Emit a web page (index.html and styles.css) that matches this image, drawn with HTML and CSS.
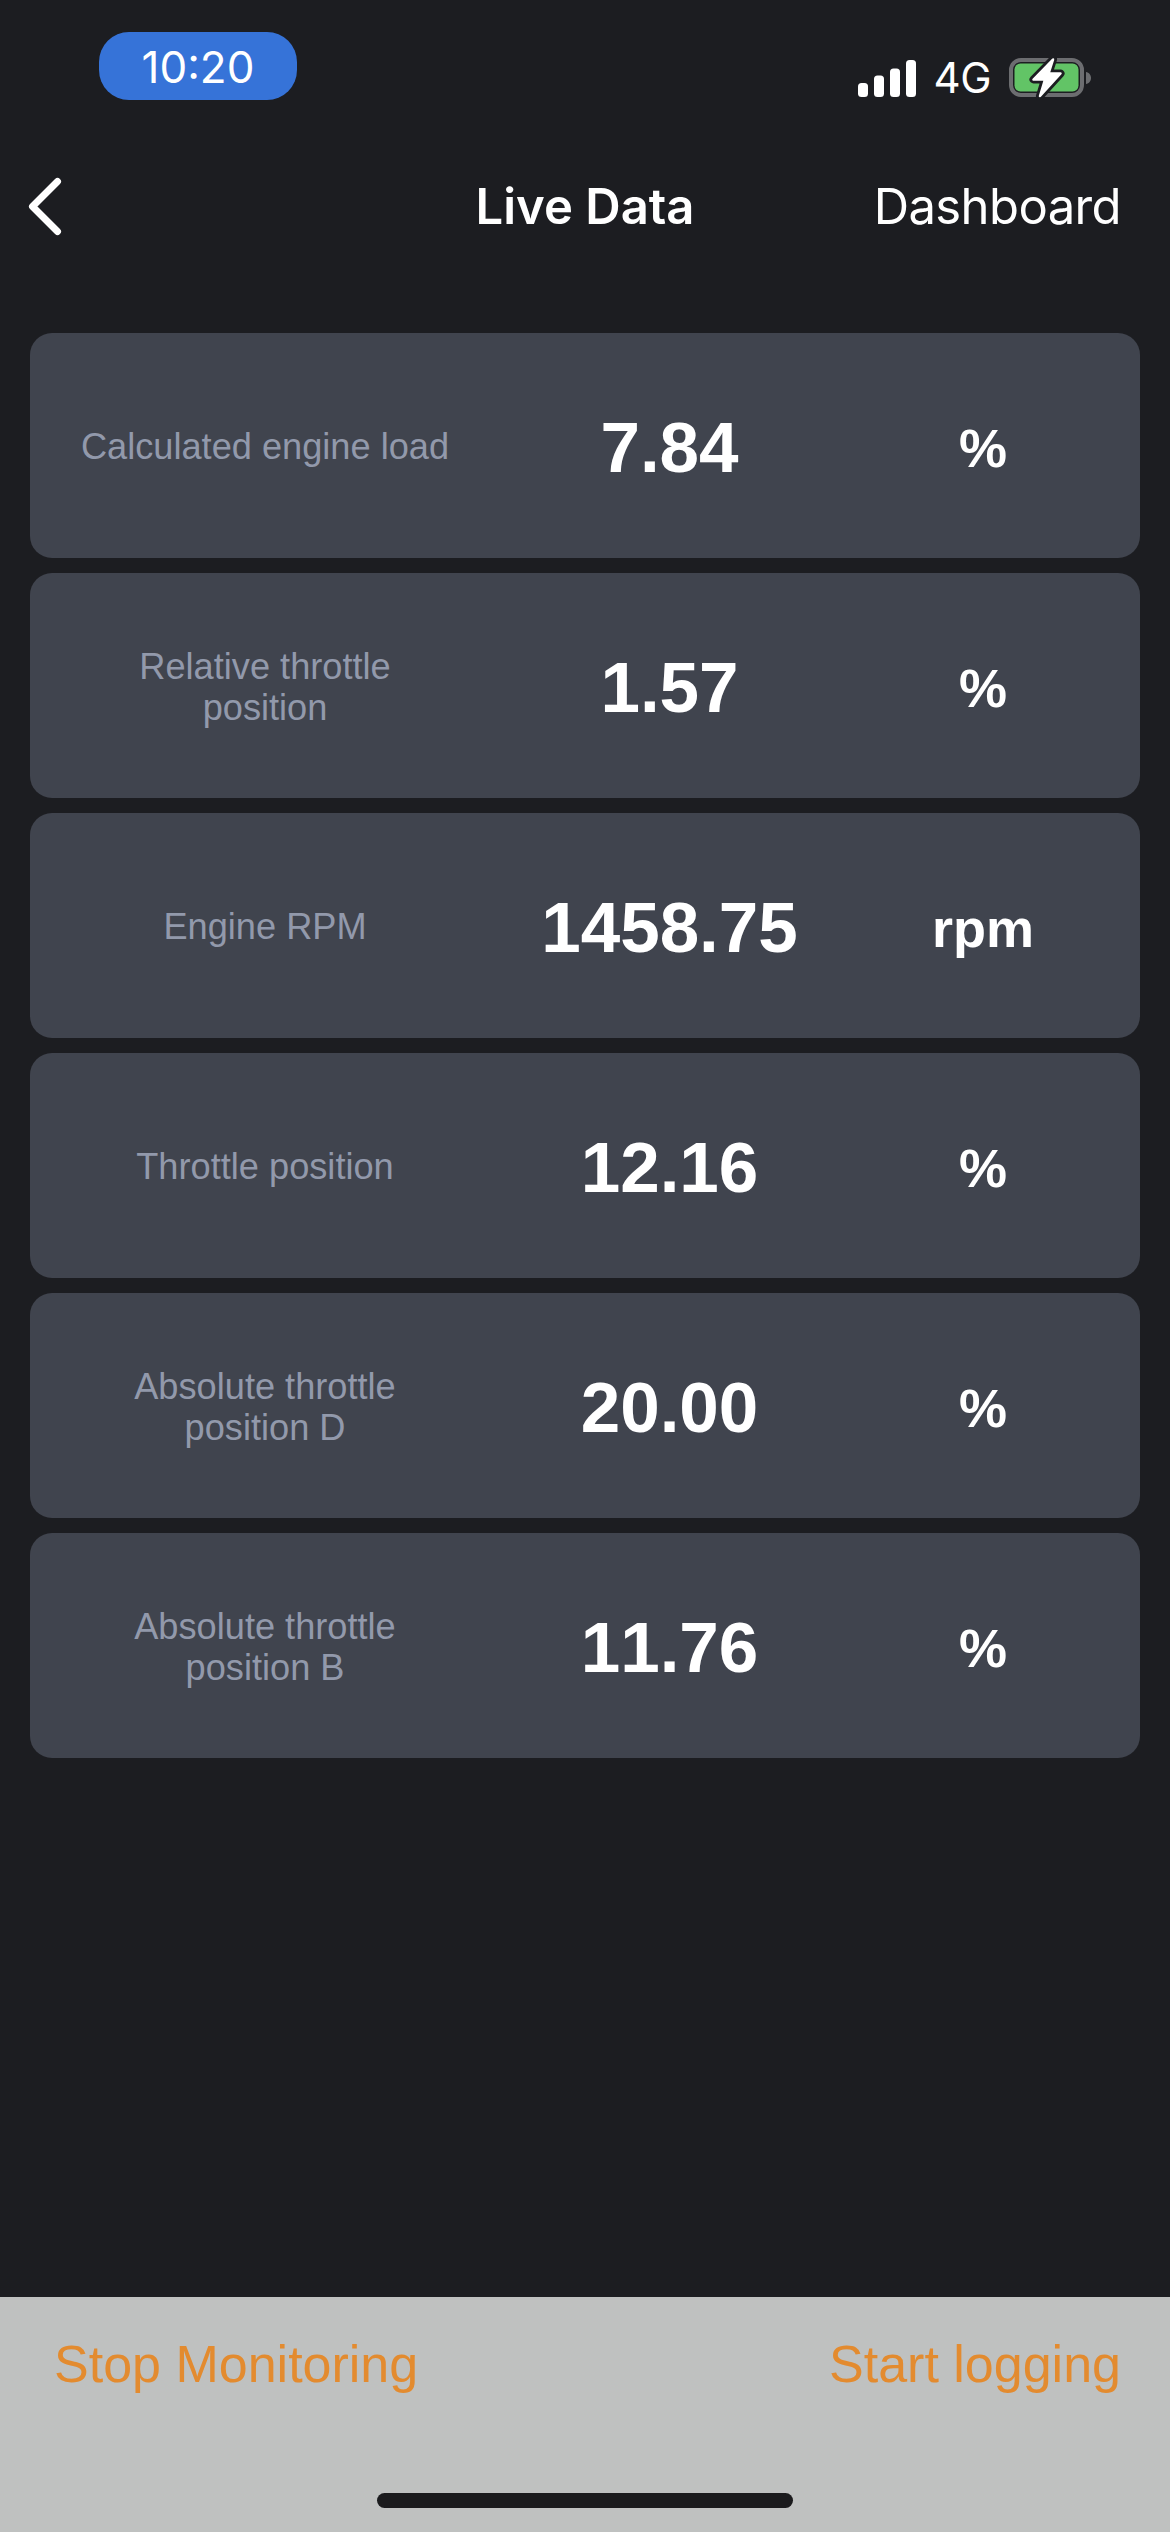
FILE: index.html
```html
<!DOCTYPE html>
<html lang="en">
<head>
    <meta charset="UTF-8">
    <meta name="viewport" content="width=device-width, initial-scale=1.0">
    <title>Live Data</title>
    <link rel="stylesheet" href="styles.css">
</head>
<body>
    <div class="screen">
        <!-- Status bar -->
        <div class="status-bar">
            <div class="time-pill">10:20</div>
            <div class="status-icons">
                <svg class="signal" width="58" height="37" viewBox="0 0 58 37">
                    <rect x="0" y="23" width="10" height="14" rx="3.5"/>
                    <rect x="16" y="15.500" width="10" height="21.500" rx="3.5"/>
                    <rect x="32" y="8.500" width="10" height="28.500" rx="3.5"/>
                    <rect x="48" y="0" width="10" height="37" rx="3.5"/>
                </svg>
                <span class="network">4G</span>
                <svg class="battery" width="82" height="42" viewBox="0 0 82 42">
                    <rect x="2" y="3" width="71" height="35" rx="10" fill="none" stroke="#6c6d70" stroke-width="4"/>
                    <rect x="5.500" y="6.500" width="64" height="28" rx="6" fill="#62c466"/>
                    <path d="M77 15 C80 15.500 82 18 82 21 C82 24 80 26.500 77 27 Z" fill="#6c6d70"/>
                    <path d="M44 2.500 L24.500 22.500 L36 22.500 L31 39 L51.500 16.500 L39.500 16.500 Z" fill="#1c1d21" stroke="#1c1d21" stroke-width="8" stroke-linejoin="round"/>
                    <path d="M44 2.500 L24.500 22.500 L36 22.500 L31 39 L51.500 16.500 L39.500 16.500 Z" fill="#fff" stroke="#fff" stroke-width="2.500" stroke-linejoin="round"/>
                </svg>
            </div>
        </div>

        <!-- Nav bar -->
        <div class="nav-bar">
            <svg class="back" width="34" height="60" viewBox="0 0 34 60">
                <path d="M29.500 4.500 L4.500 29.500 L29.500 54.500" fill="none" stroke="#fff" stroke-width="7" stroke-linecap="round" stroke-linejoin="round"/>
            </svg>
            <div class="nav-title">Live Data</div>
            <div class="nav-action">Dashboard</div>
        </div>

        <!-- Data rows -->
        <div class="rows">
            <div class="row">
                <div class="row-label">Calculated engine load</div>
                <div class="row-value">7.84</div>
                <div class="row-unit">%</div>
            </div>
            <div class="row">
                <div class="row-label">Relative throttle<br>position</div>
                <div class="row-value">1.57</div>
                <div class="row-unit">%</div>
            </div>
            <div class="row">
                <div class="row-label">Engine RPM</div>
                <div class="row-value">1458.75</div>
                <div class="row-unit">rpm</div>
            </div>
            <div class="row">
                <div class="row-label">Throttle position</div>
                <div class="row-value">12.16</div>
                <div class="row-unit">%</div>
            </div>
            <div class="row">
                <div class="row-label">Absolute throttle<br>position D</div>
                <div class="row-value">20.00</div>
                <div class="row-unit">%</div>
            </div>
            <div class="row">
                <div class="row-label">Absolute throttle<br>position B</div>
                <div class="row-value">11.76</div>
                <div class="row-unit">%</div>
            </div>
        </div>

        <!-- Bottom toolbar -->
        <div class="toolbar">
            <div class="toolbar-actions">
                <span>Stop Monitoring</span>
                <span>Start logging</span>
            </div>
            <div class="home-indicator"></div>
        </div>
    </div>
</body>
</html>
```

FILE: styles.css
```css
/* Reset & Base Styles */
html, body {
    margin: 0;
    padding: 0;
    background: #1c1d21;
}

.screen {
    width: 1170px;
    height: 2532px;
    display: flex;
    flex-direction: column;
    overflow: hidden;
    font-family: 'Liberation Sans', Arial, sans-serif;
    color: #fff;
}

/* Status Bar */
.status-bar {
    height: 100px;
    padding: 32px 79px 0 99px;
    box-sizing: border-box;
    display: flex;
    justify-content: space-between;
}

.time-pill {
    width: 198px;
    height: 68px;
    border-radius: 30px;
    background: #3673d8;
    font-family: 'Inter', sans-serif;
    font-size: 44px;
    line-height: 70px;
    text-align: center;
}

.status-icons {
    display: flex;
    align-items: center;
    gap: 18px;
    height: 42px;
    margin-top: 25px;
}

.signal {
    fill: #fff;
}

.network {
    font-family: 'Inter', sans-serif;
    font-size: 42px;
    letter-spacing: -0.5px;
    line-height: 42px;
}

/* Nav Bar */
.nav-bar {
    height: 233px;
    position: relative;
    display: flex;
    justify-content: space-between;
    align-items: flex-start;
    padding: 77px 49px 0 28px;
    box-sizing: border-box;
    font-family: 'Inter', sans-serif;
    font-size: 49px;
}

.nav-title {
    position: absolute;
    left: 0;
    right: 0;
    top: 78px;
    text-align: center;
    font-weight: 600;
    line-height: 58px;
}

.nav-action {
    margin-top: 1px;
    line-height: 58px;
    letter-spacing: -0.6px;
}

/* Data Rows */
.rows {
    flex: 1;
    padding: 0 30px;
    display: flex;
    flex-direction: column;
    gap: 15px;
}

.row {
    height: 225px;
    display: grid;
    grid-template-columns: 470px 1fr 314px;
    align-items: center;
    text-align: center;
    background: #40444e;
    border-radius: 22px;
}

.row-label {
    padding-top: 2px;
    color: #9299ab;
    font-size: 36.200px;
    line-height: 41px;
}

.row-value {
    padding: 4px 0 0 13px;
    font-size: 71px;
    font-weight: 700;
    font-kerning: none;
}

.row-unit {
    padding-top: 4px;
    font-size: 54px;
    font-weight: 700;
}

/* Bottom Toolbar */
.toolbar {
    height: 235px;
    background: #bfc1c0;
    display: flex;
    flex-direction: column;
    align-items: center;
    color: #e38b2f;
}

.toolbar-actions {
    width: 100%;
    box-sizing: border-box;
    padding: 38px 49px 0 54px;
    display: flex;
    justify-content: space-between;
    font-size: 52px;
    line-height: 58px;
}

.home-indicator {
    width: 416px;
    height: 15px;
    margin-top: 100px;
    border-radius: 8px;
    background: #1b1b1d;
}
```
